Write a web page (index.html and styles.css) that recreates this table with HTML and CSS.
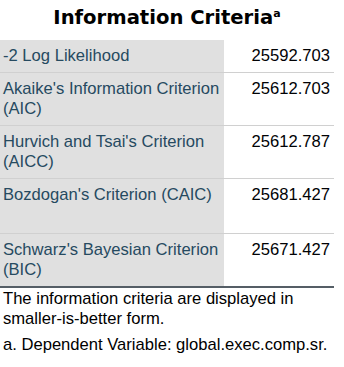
FILE: index.html
```html
<!DOCTYPE html>
<html>
<head>
<meta charset="utf-8">
<link rel="stylesheet" href="styles.css">
</head>
<body>
<div class="wrap">
  <div class="title">Information Criteria<sup>a</sup></div>
  <table class="grid">
    <tr class="r1"><td class="lab">-2 Log Likelihood</td><td class="val">25592.703</td></tr>
    <tr class="r2"><td class="lab">Akaike's Information Criterion (AIC)</td><td class="val">25612.703</td></tr>
    <tr class="r3"><td class="lab">Hurvich and Tsai's Criterion (AICC)</td><td class="val">25612.787</td></tr>
    <tr class="r4"><td class="lab">Bozdogan's Criterion (CAIC)</td><td class="val">25681.427</td></tr>
    <tr class="r5 last"><td class="lab">Schwarz's Bayesian Criterion (BIC)</td><td class="val">25671.427</td></tr>
  </table>
  <div class="foot">
    <p class="note">The information criteria are displayed in smaller-is-better form.</p>
    <p class="note2">a. Dependent Variable: global.exec.comp.sr.</p>
  </div>
</div>
</body>
</html>
```
FILE: styles.css
```css
html, body {
  margin: 0;
  padding: 0;
  background: #ffffff;
}
.wrap {
  width: 334px;
  font-family: "Liberation Sans", Arial, sans-serif;
}
.title {
  font-family: "DejaVu Sans", Verdana, sans-serif;
  font-weight: bold;
  font-size: 19.6px;
  line-height: 22px;
  text-align: center;
  color: #000000;
  padding-top: 7px;
  height: 40px;
  box-sizing: border-box;
}
.title sup {
  font-size: 11px;
  vertical-align: top;
  line-height: 11px;
  position: relative;
  top: 1px;
}
.grid {
  width: 334px;
  border-collapse: collapse;
  font-size: 16.6px;
  line-height: 20px;
}
.grid td {
  vertical-align: top;
  padding: 6px 3px;
  border-bottom: 1px solid #d0d0d0;
}
.grid .lab {
  width: 224px;
  box-sizing: border-box;
  background: #e0e0e0;
  color: #264a60;
  padding-left: 3px;
  padding-right: 2px;
}
.grid .val {
  text-align: right;
  color: #010205;
  padding-right: 4px;
}
.grid .r1 td { height: 20px; }
.grid .r2 td { height: 39px; }
.grid .r3 td { height: 40px; }
.grid .r4 td { height: 42px; }
.grid .r5 td { height: 40px; }
.grid .last td { border-bottom: 2px solid #555e66; }
.foot {
  font-size: 16.6px;
  line-height: 20px;
  color: #000000;
  padding: 1px 0 0 3px;
}
.foot p { margin: 0; }
.foot .note2 { margin-top: 6px; }
```
